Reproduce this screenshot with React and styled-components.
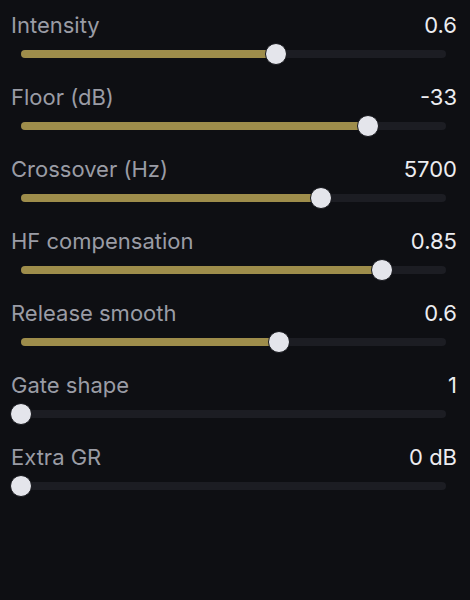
import React from "react";
import styled, { createGlobalStyle } from "styled-components";

const Global = createGlobalStyle`
  html, body { margin: 0; padding: 0; background: #0e0f13; }
  body { font-family: Inter, "Noto Sans", sans-serif; }
`;

const Panel = styled.div`
  width: 470px;
  height: 600px;
  box-sizing: border-box;
  padding: 13px 13px 0 11px;
  background: #0e0f13;
  display: flex;
  flex-direction: column;
  gap: 20px;
`;

const Row = styled.div`
  display: flex;
  flex-direction: column;
  gap: 6px;
`;

const Header = styled.div`
  display: flex;
  justify-content: space-between;
  align-items: center;
  height: 24px;
  font-size: 22px;
  line-height: 24px;
`;

const Label = styled.span`
  color: #9a9ca5;
`;

const Value = styled.span`
  color: #ececf0;
`;

const SliderArea = styled.div`
  padding: 0 11px 0 10px;
  height: 22px;
  display: flex;
  align-items: center;
`;

const Track = styled.div`
  position: relative;
  flex: 1;
  height: 8px;
  border-radius: 4px;
  background: #1c1d23;
`;

const Fill = styled.div`
  position: absolute;
  left: 0;
  top: 0;
  bottom: 0;
  border-radius: 4px;
  background: #9e8d4b;
`;

const Thumb = styled.div`
  position: absolute;
  top: 50%;
  width: 20px;
  height: 20px;
  border-radius: 50%;
  background: #e4e5eb;
  border: 1px solid #16171c;
  transform: translate(-50%, -50%);
`;

const params = [
  { label: "Intensity", value: "0.6", pct: 0.6 },
  { label: "Floor (dB)", value: "-33", pct: 0.816 },
  { label: "Crossover (Hz)", value: "5700", pct: 0.706 },
  { label: "HF compensation", value: "0.85", pct: 0.85 },
  { label: "Release smooth", value: "0.6", pct: 0.607 },
  { label: "Gate shape", value: "1", pct: 0 },
  { label: "Extra GR", value: "0 dB", pct: 0 },
];

export default function App() {
  return (
    <>
      <Global />
      <Panel>
        {params.map((p) => (
          <Row key={p.label}>
            <Header>
              <Label>{p.label}</Label>
              <Value>{p.value}</Value>
            </Header>
            <SliderArea>
              <Track>
                {p.pct > 0 && <Fill style={{ width: `${p.pct * 100}%` }} />}
                <Thumb style={{ left: `${p.pct * 100}%` }} />
              </Track>
            </SliderArea>
          </Row>
        ))}
      </Panel>
    </>
  );
}
